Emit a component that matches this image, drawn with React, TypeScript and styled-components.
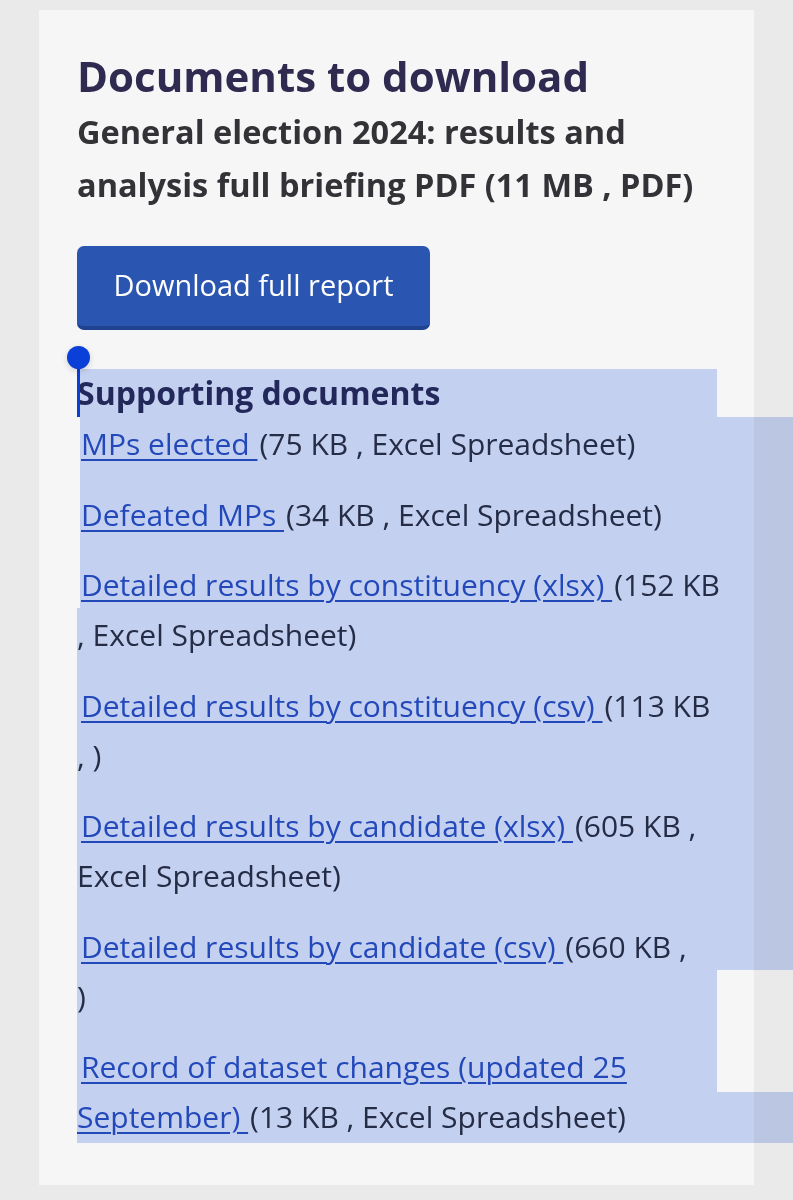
import styled, { createGlobalStyle } from "styled-components";

const GlobalStyle = createGlobalStyle`
  html, body {
    margin: 0;
    padding: 0;
    background: #ebeaea;
  }
  body {
    font-family: "Open Sans", Lato, sans-serif;
    -webkit-font-smoothing: antialiased;
  }
`;

interface IDoc {
  title: string;
  meta: string;
}

// the phone wrapped the last ")" of the csv line on its own
const docs: IDoc[] = [
  { title: "MPs elected ", meta: "(75 KB , Excel Spreadsheet)" },
  { title: "Defeated MPs ", meta: "(34 KB , Excel Spreadsheet)" },
  {
    title: "Detailed results by constituency (xlsx) ",
    meta: "(152 KB , Excel Spreadsheet)",
  },
  { title: "Detailed results by constituency (csv) ", meta: "(113 KB , )" },
  {
    title: "Detailed results by candidate (xlsx) ",
    meta: "(605 KB , Excel Spreadsheet)",
  },
  { title: "Detailed results by candidate (csv) ", meta: "(660 KB ,\n)" },
  {
    title: "Record of dataset changes (updated 25 September) ",
    meta: "(13 KB , Excel Spreadsheet)",
  },
];

// rectangles of the text selection, as the phone draws them
const selection = [
  { left: 77, top: 369, width: 640, height: 48 },
  { left: 80, top: 417, width: 713, height: 191 },
  { left: 77, top: 608, width: 716, height: 362 },
  { left: 77, top: 970, width: 640, height: 122 },
  { left: 77, top: 1092, width: 716, height: 51 },
];

function App() {
  return (
    <>
      <GlobalStyle />
      <StyledPage>
        <div className="card">
          <h1 className="card__title">Documents to download</h1>
          <p className="card__subtitle">
            General election 2024: results and analysis full briefing PDF (11
            MB , PDF)
          </p>
          <button className="card__button">Download full report</button>

          <h2 className="docs__heading">Supporting documents</h2>
          <ul className="docs__list">
            {docs.map((item, index) => (
              <li className="docs__item" key={index}>
                <a className="docs__link" href="#">
                  {item.title}
                </a>
                <span className="docs__meta">{item.meta}</span>
              </li>
            ))}
          </ul>
        </div>

        {selection.map((rect, index) => (
          <SelectionRect
            key={index}
            style={{
              left: rect.left,
              top: rect.top,
              width: rect.width,
              height: rect.height,
            }}
          />
        ))}
        <SelectionHandle />
      </StyledPage>
    </>
  );
}
export default App;

const StyledPage = styled.div`
  position: relative;
  width: 793px;
  height: 1200px;
  overflow: hidden;
  padding: 10px 39px 0 39px;
  box-sizing: border-box;

  .card {
    background: #f7f6f7;
    height: 1175px;
    box-sizing: border-box;
    padding: 41px 36px 0 38px;
    display: flex;
    flex-direction: column;
    align-items: flex-start;
  }

  .card__title {
    margin: 0;
    font-size: 42px;
    line-height: 50px;
    font-weight: 700;
    color: #2e2a50;
  }

  .card__subtitle {
    margin: 4px 0 0 0;
    font-size: 32.5px;
    line-height: 53px;
    font-weight: 700;
    color: #333236;
  }

  .card__button {
    margin-top: 35px;
    width: 353px;
    height: 84px;
    padding: 0 0 3px 0;
    border: none;
    border-bottom: 4px solid #1f4390;
    border-radius: 7px;
    background: #2a55b0;
    color: #ffffff;
    font-family: inherit;
    font-size: 29px;
    font-weight: 400;
  }

  .docs__heading {
    margin: 40px 0 0 0;
    font-size: 32px;
    line-height: 46px;
    font-weight: 700;
    color: #2b2f5c;
  }

  .docs__list {
    list-style: none;
    margin: 0;
    padding: 3px 0 0 0;
    width: 646px;
  }

  .docs__item {
    font-size: 30px;
    line-height: 50px;
    color: #2d3348;
    margin-bottom: 20.5px;
  }

  .docs__link {
    padding-left: 4px;
    color: #2a55c0;
    text-decoration: underline;
    text-decoration-thickness: 2px;
    text-underline-offset: 4px;
  }

  .docs__meta {
    margin-left: 2px;
    white-space: pre-line;
  }
`;

const SelectionRect = styled.div`
  position: absolute;
  background: #cbd8f8;
  mix-blend-mode: multiply;
  pointer-events: none;
`;

const SelectionHandle = styled.div`
  position: absolute;
  left: 77px;
  top: 358px;
  width: 3px;
  height: 59px;
  background: #0a3fd8;

  &::before {
    content: "";
    position: absolute;
    left: -10px;
    top: -12px;
    width: 23px;
    height: 23px;
    border-radius: 50%;
    background: #0a3fd8;
    box-shadow: 0 2px 6px rgba(0, 0, 0, 0.15);
  }
`;
